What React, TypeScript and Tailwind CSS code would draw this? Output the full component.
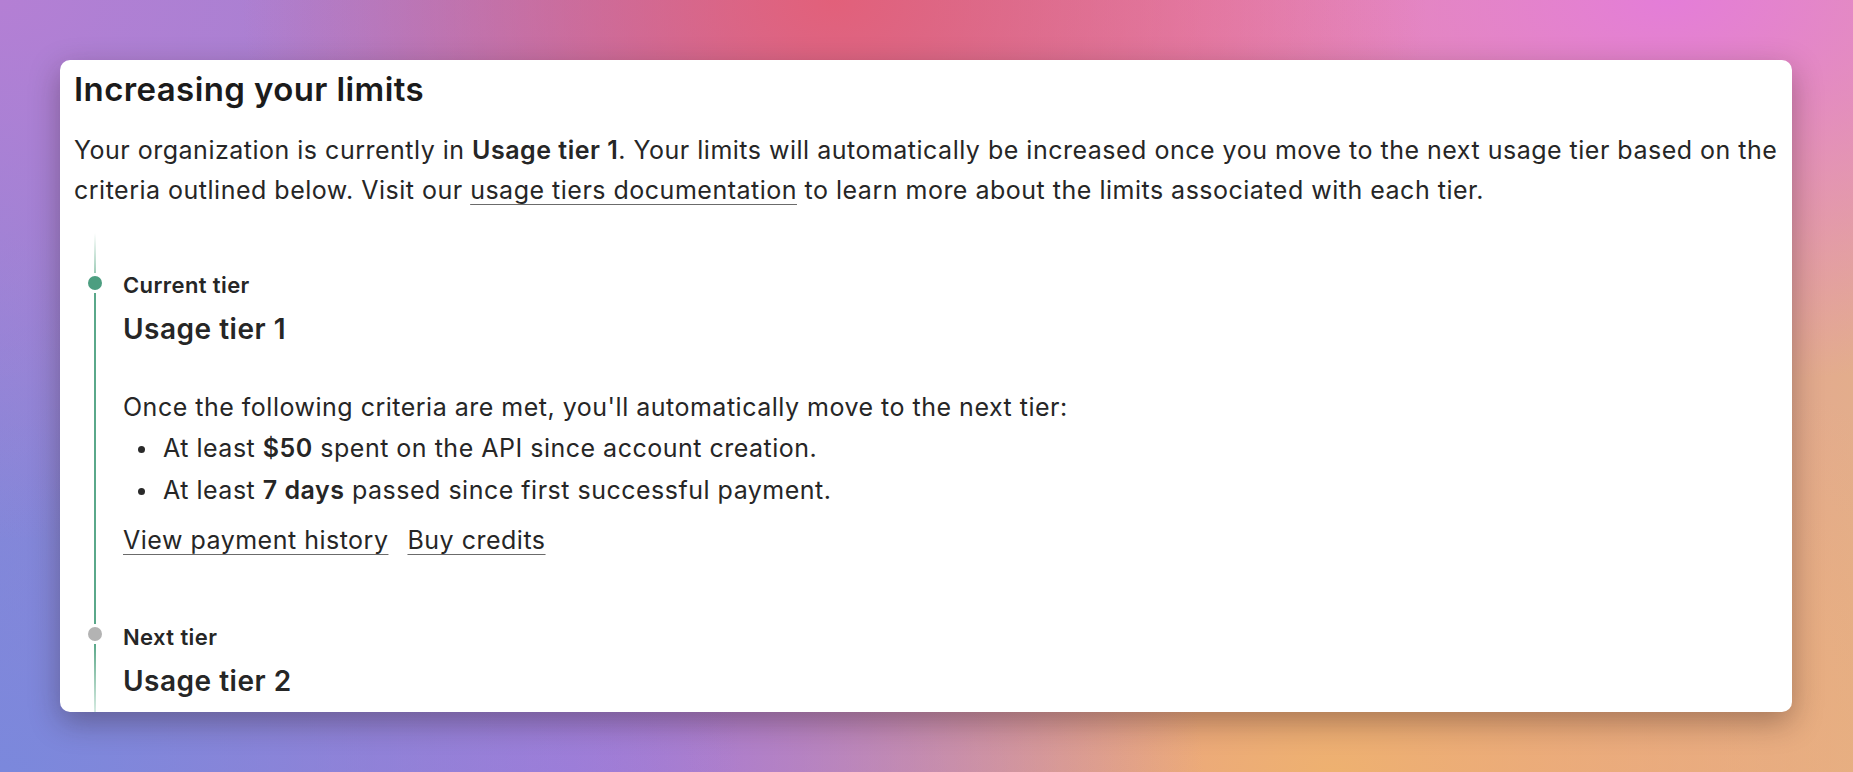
import React from "react";

const FONT = "font-['Inter','Liberation_Sans',sans-serif]";

function Rail({
  dot,
  top,
  bottom,
}: {
  dot: string;
  top: string;
  bottom: string;
}) {
  return (
    <div className="flex w-[42px] shrink-0 flex-col items-center">
      <div className={`h-[40px] w-[2px] ${top}`} />
      <div className={`my-[3px] h-[14px] w-[14px] rounded-full ${dot}`} />
      <div className={`w-[2px] flex-1 ${bottom}`} />
    </div>
  );
}

function Bullet({ children }: { children: React.ReactNode }) {
  return (
    <li className="flex h-[42px] items-center pl-[15px]">
      <span className="h-[7px] w-[7px] shrink-0 rounded-full bg-[#2a2a2a]" />
      <span className="ml-[18px]">{children}</span>
    </li>
  );
}

const LINK =
  "underline decoration-[#6b6b6b] decoration-1 underline-offset-[5px]";

export default function App() {
  return (
    <div
      className={`${FONT} flex h-[772px] w-full items-start bg-[image:radial-gradient(32%_55%_at_45%_0%,#e2607a_0%,transparent_100%),radial-gradient(40%_50%_at_90%_0%,#e47dd8_0%,transparent_100%),radial-gradient(45%_70%_at_0%_0%,#b47fd4_0%,transparent_100%),radial-gradient(40%_70%_at_0%_100%,#7b88dc_0%,transparent_100%),radial-gradient(35%_50%_at_30%_100%,#a67ad8_0%,transparent_100%),radial-gradient(45%_60%_at_72%_100%,#eeb170_0%,transparent_100%),linear-gradient(90deg,#8c86d6,#b07ac0_35%,#e48aa4_65%,#e3ad8c)] p-[60px]`}
    >
      <div className="flex h-[652px] w-[1732px] flex-col overflow-hidden rounded-[10px] bg-white px-[14px] pt-[9px] text-[#262626] shadow-[0_10px_30px_rgba(40,20,20,0.35)]">
        <h1 className="text-[33px] font-semibold leading-[40px] tracking-[0.4px] text-[#1b1b1b]">
          Increasing your limits
        </h1>
        <p className="mt-[21px] whitespace-nowrap text-[25px] leading-[40px] tracking-[0.5px]">
          Your organization is currently in{" "}
          <span className="font-semibold">Usage tier 1</span>. Your limits will
          automatically be increased once you move to the next usage tier based
          on the
          <br />
          criteria outlined below. Visit our{" "}
          <a className={LINK}>usage tiers documentation</a> to learn more about
          the limits associated with each tier.
        </p>

        <div className="mt-[23px] flex flex-1 flex-col">
          {/* Current tier */}
          <div className="flex">
            <Rail
              dot="bg-[#4c9e80]"
              top="bg-gradient-to-b from-white to-[#9fcdb9]"
              bottom="bg-[#5aa88a]"
            />
            <div className="ml-[7px] flex flex-col pb-[24px] pt-[38px]">
              <div className="text-[22px] font-semibold leading-[28px] tracking-[0.4px] text-[#262626]">
                Current tier
              </div>
              <div className="mt-[12px] text-[28px] font-semibold leading-[36px] tracking-[0.5px] text-[#262626]">
                Usage tier 1
              </div>
              <p className="mt-[40px] text-[25px] leading-[40px] tracking-[0.5px]">
                Once the following criteria are met, you'll automatically move
                to the next tier:
              </p>
              <ul className="mt-[1px] text-[25px] tracking-[0.5px]">
                <Bullet>
                  At least <span className="font-semibold">$50</span> spent on
                  the API since account creation.
                </Bullet>
                <Bullet>
                  At least <span className="font-semibold">7 days</span> passed
                  since first successful payment.
                </Bullet>
              </ul>
              <div className="mt-[8px] flex gap-[19px] text-[25px] leading-[40px] tracking-[0.5px]">
                <a className={LINK}>View payment history</a>
                <a className={LINK}>Buy credits</a>
              </div>
            </div>
          </div>

          {/* Next tier */}
          <div className="flex flex-1">
            <Rail
              dot="bg-[#b3b3b3]"
              top="bg-[#5aa88a]"
              bottom="bg-gradient-to-b from-[#5aa88a] to-[#d6ebe2]"
            />
            <div className="ml-[7px] flex flex-col pt-[39px]">
              <div className="text-[22px] font-semibold leading-[28px] tracking-[0.4px] text-[#262626]">
                Next tier
              </div>
              <div className="mt-[12px] text-[28px] font-semibold leading-[36px] tracking-[0.5px] text-[#262626]">
                Usage tier 2
              </div>
            </div>
          </div>
        </div>
      </div>
    </div>
  );
}
